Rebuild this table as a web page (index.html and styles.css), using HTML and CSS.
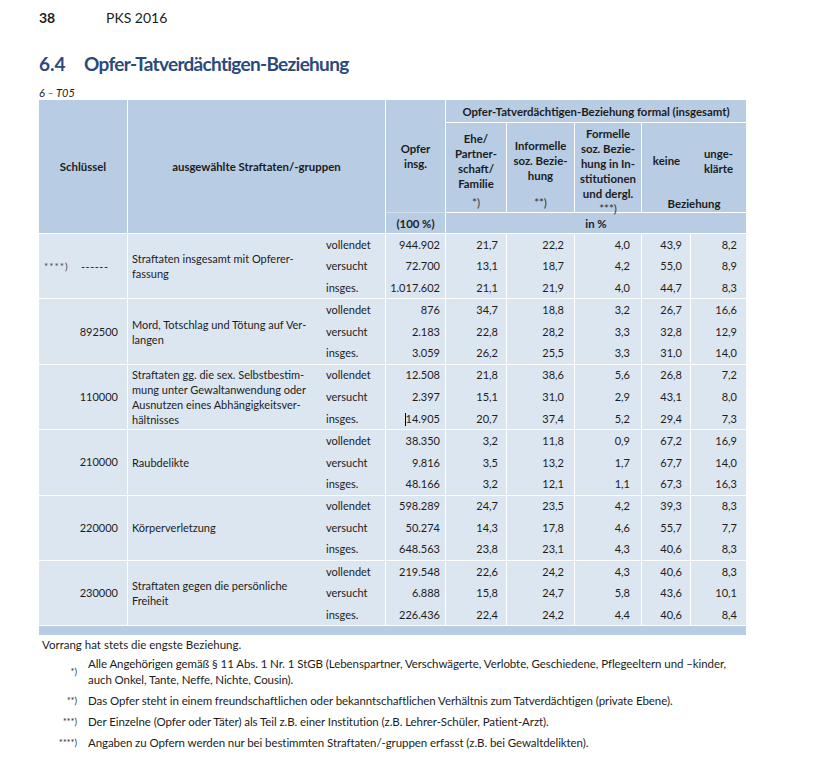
FILE: index.html
```html
<!DOCTYPE html>
<html lang="de">
<head>
<meta charset="utf-8">
<title>PKS 2016 – 6.4 Opfer-Tatverdächtigen-Beziehung</title>
<link rel="stylesheet" href="styles.css">
</head>
<body>
<div class="page">
  <div class="running"><span class="pno">38</span><span class="pks">PKS 2016</span></div>
  <h1 class="title"><span class="num">6.4</span><span class="txt">Opfer-Tatverdächtigen-Beziehung</span></h1>
  <div class="tabid">6 – T05</div>

  <table class="t">
    <colgroup>
      <col class="c-key"><col class="c-desc"><col class="c-st"><col class="c-op">
      <col class="c-ehe"><col class="c-inf"><col class="c-for"><col class="c-kei"><col class="c-ung">
    </colgroup>
    <thead>
      <tr class="h1">
        <th rowspan="3" class="hk">Schlüssel</th>
        <th rowspan="3" colspan="2" class="hd">ausgewählte Straftaten/-gruppen</th>
        <th rowspan="2" class="hop">Opfer<br>insg.</th>
        <th colspan="5" class="hgrp">Opfer-Tatverdächtigen-Beziehung formal (insgesamt)</th>
      </tr>
      <tr class="h2">
        <th><div class="sub"><div class="lbl">Ehe/<br>Partner-<br>schaft/<br>Familie</div><div class="mk">*)</div></div></th>
        <th><div class="sub"><div class="lbl">Informelle<br>soz. Bezie-<br>hung</div><div class="mk">**)</div></div></th>
        <th><div class="sub"><div class="lbl">Formelle<br>soz. Bezie-<br>hung in In-<br>stitutionen<br>und dergl.</div><div class="mk">***)</div></div></th>
        <th colspan="2"><div class="sub2"><div class="lbl">keine</div><div class="lbl">unge-<br>klärte</div><div class="bez">Beziehung</div></div></th>
      </tr>
      <tr class="h3">
        <th class="hpc">(100 %)</th>
        <th colspan="5">in %</th>
      </tr>
    </thead>
    <tbody>
      <tr class="r1">
        <td rowspan="3" class="key key0"><span class="stars">****)</span><span class="dash">------</span></td>
        <td rowspan="3" class="desc">Straftaten insgesamt mit Opferer-<br>fassung</td>
        <td class="st">vollendet</td><td>944.902</td><td>21,7</td><td>22,2</td><td>4,0</td><td>43,9</td><td>8,2</td>
      </tr>
      <tr class="r2"><td class="st">versucht</td><td>72.700</td><td>13,1</td><td>18,7</td><td>4,2</td><td>55,0</td><td>8,9</td></tr>
      <tr class="r3"><td class="st">insges.</td><td>1.017.602</td><td>21,1</td><td>21,9</td><td>4,0</td><td>44,7</td><td>8,3</td></tr>

      <tr class="r1">
        <td rowspan="3" class="key">892500</td>
        <td rowspan="3" class="desc">Mord, Totschlag und Tötung auf Ver-<br>langen</td>
        <td class="st">vollendet</td><td>876</td><td>34,7</td><td>18,8</td><td>3,2</td><td>26,7</td><td>16,6</td>
      </tr>
      <tr class="r2"><td class="st">versucht</td><td>2.183</td><td>22,8</td><td>28,2</td><td>3,3</td><td>32,8</td><td>12,9</td></tr>
      <tr class="r3"><td class="st">insges.</td><td>3.059</td><td>26,2</td><td>25,5</td><td>3,3</td><td>31,0</td><td>14,0</td></tr>

      <tr class="r1">
        <td rowspan="3" class="key">110000</td>
        <td rowspan="3" class="desc">Straftaten gg. die sex. Selbstbestim-<br>mung unter Gewaltanwendung oder<br>Ausnutzen eines Abhängigkeitsver-<br>hältnisses</td>
        <td class="st">vollendet</td><td>12.508</td><td>21,8</td><td>38,6</td><td>5,6</td><td>26,8</td><td>7,2</td>
      </tr>
      <tr class="r2"><td class="st">versucht</td><td>2.397</td><td>15,1</td><td>31,0</td><td>2,9</td><td>43,1</td><td>8,0</td></tr>
      <tr class="r3"><td class="st">insges.</td><td><span class="caret"></span>14.905</td><td>20,7</td><td>37,4</td><td>5,2</td><td>29,4</td><td>7,3</td></tr>

      <tr class="r1">
        <td rowspan="3" class="key">210000</td>
        <td rowspan="3" class="desc">Raubdelikte</td>
        <td class="st">vollendet</td><td>38.350</td><td>3,2</td><td>11,8</td><td>0,9</td><td>67,2</td><td>16,9</td>
      </tr>
      <tr class="r2"><td class="st">versucht</td><td>9.816</td><td>3,5</td><td>13,2</td><td>1,7</td><td>67,7</td><td>14,0</td></tr>
      <tr class="r3"><td class="st">insges.</td><td>48.166</td><td>3,2</td><td>12,1</td><td>1,1</td><td>67,3</td><td>16,3</td></tr>

      <tr class="r1">
        <td rowspan="3" class="key">220000</td>
        <td rowspan="3" class="desc">Körperverletzung</td>
        <td class="st">vollendet</td><td>598.289</td><td>24,7</td><td>23,5</td><td>4,2</td><td>39,3</td><td>8,3</td>
      </tr>
      <tr class="r2"><td class="st">versucht</td><td>50.274</td><td>14,3</td><td>17,8</td><td>4,6</td><td>55,7</td><td>7,7</td></tr>
      <tr class="r3"><td class="st">insges.</td><td>648.563</td><td>23,8</td><td>23,1</td><td>4,3</td><td>40,6</td><td>8,3</td></tr>

      <tr class="r1">
        <td rowspan="3" class="key">230000</td>
        <td rowspan="3" class="desc">Straftaten gegen die persönliche<br>Freiheit</td>
        <td class="st">vollendet</td><td>219.548</td><td>22,6</td><td>24,2</td><td>4,3</td><td>40,6</td><td>8,3</td>
      </tr>
      <tr class="r2"><td class="st">versucht</td><td>6.888</td><td>15,8</td><td>24,7</td><td>5,8</td><td>43,6</td><td>10,1</td></tr>
      <tr class="r3"><td class="st">insges.</td><td>226.436</td><td>22,4</td><td>24,2</td><td>4,4</td><td>40,6</td><td>8,4</td></tr>
    </tbody>
    <tfoot>
      <tr class="foot"><td colspan="9"></td></tr>
    </tfoot>
  </table>

  <p class="prio">Vorrang hat stets die engste Beziehung.</p>
  <div class="notes">
    <span class="nm">*)</span><span class="nt">Alle Angehörigen gemäß § 11 Abs. 1 Nr. 1 StGB (Lebenspartner, Verschwägerte, Verlobte, Geschiedene, Pflegeeltern und –kinder,<br>auch Onkel, Tante, Neffe, Nichte, Cousin).</span>
    <span class="nm">**)</span><span class="nt">Das Opfer steht in einem freundschaftlichen oder bekanntschaftlichen Verhältnis zum Tatverdächtigen (private Ebene).</span>
    <span class="nm">***)</span><span class="nt">Der Einzelne (Opfer oder Täter) als Teil z.B. einer Institution (z.B. Lehrer-Schüler, Patient-Arzt).</span>
    <span class="nm">****)</span><span class="nt">Angaben zu Opfern werden nur bei bestimmten Straftaten/-gruppen erfasst (z.B. bei Gewaltdelikten).</span>
  </div>
</div>
</body>
</html>
```

FILE: styles.css
```css
* { box-sizing: border-box; }

body {
  margin: 0;
  background: #fff;
  color: #1c1c1c;
  font-family: Lato, "Open Sans", sans-serif;
}

.page {
  width: 822px;
  padding: 9px 0 0 39px;
}

.running {
  display: flex;
  font-size: 14px;
  line-height: 17px;
  height: 17px;
}
.pno { font-weight: 700; width: 67px; }

.title {
  margin: 27px 0 0;
  display: flex;
  font-size: 19px;
  line-height: 22px;
  font-weight: 700;
  color: #2b4a7c;
}
.title .num { width: 45px; }
.title .txt { letter-spacing: -0.7px; }

.tabid {
  margin-top: 12px;
  font-size: 11px;
  line-height: 12px;
  font-style: italic;
}

/* ---------- table ---------- */
.t {
  margin-top: 1px;
  width: 707px;
  table-layout: fixed;
  border-collapse: separate;
  border-spacing: 0;
  font-size: 11px;
}
.c-key { width: 89px; }
.c-desc { width: 196px; }
.c-st { width: 62px; }
.c-op { width: 60px; }
.c-ehe { width: 61px; }
.c-inf { width: 68px; }
.c-for { width: 67px; }
.c-kei { width: 49px; }
.c-ung { width: 55px; }

.t th {
  background: #b8cce4;
  font-weight: 700;
  font-size: 11.4px;
  text-align: center;
  vertical-align: middle;
  padding: 0;
  line-height: 15px;
  border-right: 1px solid #fff;
  border-bottom: 1px solid #fff;
}
.t th:last-child { border-right: 0; }

.h1 { height: 23px; }
.h2 { height: 90px; }
.h3 { height: 21px; }

.hop { padding-top: 6px; border-bottom-color: #d3dfed !important; }

.sub {
  height: 89px;
  display: flex;
  flex-direction: column;
}
.sub .lbl {
  flex: 1;
  display: flex;
  align-items: center;
  justify-content: center;
  padding-top: 3px;
}
.mk {
  height: 17px;
  line-height: 16px;
  font-weight: 400;
  color: #333;
}
.sub2 {
  height: 89px;
  display: grid;
  grid-template-columns: 49px 55px;
  grid-template-rows: 1fr 17px;
}
.sub2 .lbl {
  display: flex;
  align-items: center;
  justify-content: center;
  padding-top: 3px;
}
.bez {
  grid-column: 1 / 3;
  line-height: 18px;
}

/* body */
.t td {
  background: #dce6f1;
  padding: 0;
  text-align: right;
  vertical-align: middle;
  line-height: 14px;
  border-right: 1px solid #fff;
  white-space: nowrap;
}
.t td:last-child { border-right: 0; }

.r1 { height: 21.4px; }
.r2 { height: 22px; }
.r3 { height: 22px; }
.r3 td, .t td.key, .t td.desc { border-bottom: 1px solid #fff; }

.t td.key { padding-right: 9px; }
.t td.key0 { text-align: left; padding: 0 0 0 5px; }
.stars {
  display: inline-block;
  width: 37px;
  font-size: 10px;
  letter-spacing: 1px;
  color: #444;
  vertical-align: 1px;
}
.dash { letter-spacing: 0.5px; }

.t td.desc {
  text-align: left;
  padding-left: 4px;
  line-height: 15px;
  border-right: 0;
}
.t td.st { text-align: left; padding-left: 2px; }

.t td:nth-last-child(6) { padding-right: 5px; }
.t td:nth-last-child(5) { padding-right: 8px; }
.t td:nth-last-child(4) { padding-right: 10px; }
.t td:nth-last-child(3) { padding-right: 11px; }
.t td:nth-last-child(2) { padding-right: 8px; }
.t td:nth-last-child(1) { padding-right: 9px; }

.caret {
  display: inline-block;
  width: 1px;
  height: 13px;
  background: #000;
  vertical-align: -3px;
}

.foot { height: 9px; }
.t .foot td { background: #b8cce4; border: 0; padding: 0; }

/* notes */
.prio {
  margin: 3px 0 0 3px;
  font-size: 11.5px;
  line-height: 14px;
}
.notes {
  margin-top: 4px;
  display: grid;
  grid-template-columns: 38px auto;
  column-gap: 11px;
  row-gap: 5px;
  font-size: 11.5px;
  line-height: 16px;
  letter-spacing: -0.08px;
}
.nm {
  align-self: center;
  text-align: right;
  font-size: 9.5px;
  color: #333;
}
.nt { white-space: nowrap; }
```
